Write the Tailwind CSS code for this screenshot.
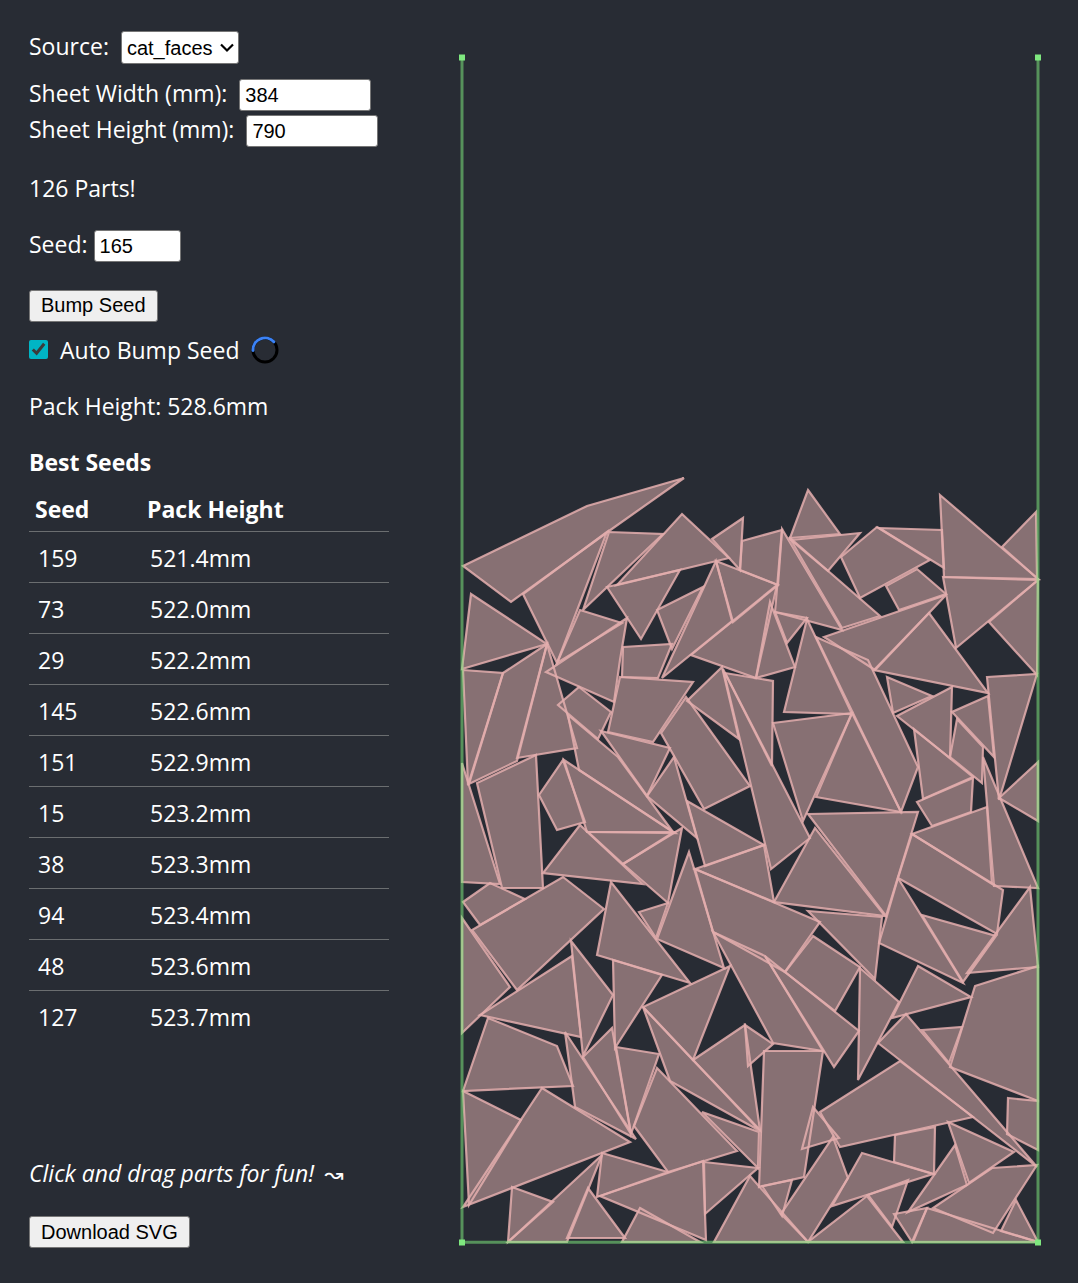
<!DOCTYPE html>
<html lang="en">
<head>
<meta charset="utf-8">
<meta name="viewport" content="width=device-width, initial-scale=1">
<title>Part Packing</title>
<script src="https://cdn.jsdelivr.net/npm/@tailwindcss/browser@4"></script>
</head>
<body class="min-h-screen bg-[#282c34] font-['Open_Sans',sans-serif] text-[23px] leading-8 text-white">
<main class="flex">
  <aside class="flex w-[456px] shrink-0 flex-col pt-[31px] pr-[67px] pl-[29px]">
    <div class="flex items-center gap-3">
      <label for="source" class="pb-1 leading-7">Source:</label>
      <div class="relative">
        <select id="source" class="block h-[33px] w-[118px] appearance-none rounded-[3px] border border-[#767676] bg-white pl-[5px] font-['Liberation_Sans',sans-serif] text-[20px] leading-6 text-black">
          <option>cat_faces</option>
        </select>
        <svg class="pointer-events-none absolute top-3 right-[5px] h-[10px] w-[14px]" viewBox="0 0 14 10" fill="none" stroke="#000" stroke-width="2.200"><path d="M1 1.500l6 6 6-6"/></svg>
      </div>
    </div>
    <div class="mt-[15px] flex items-center gap-3">
      <label for="sheet-width" class="pb-1 leading-7">Sheet Width (mm):</label>
      <input id="sheet-width" type="number" value="384" class="h-8 w-[132px] rounded-[3px] border border-[#767676] bg-white px-[5px] font-['Liberation_Sans',sans-serif] text-[20px] text-black">
    </div>
    <div class="mt-1 flex items-center gap-3">
      <label for="sheet-height" class="pb-1 leading-7">Sheet Height (mm):</label>
      <input id="sheet-height" type="number" value="790" class="h-8 w-[132px] rounded-[3px] border border-[#767676] bg-white px-[5px] font-['Liberation_Sans',sans-serif] text-[20px] text-black">
    </div>
    <p class="mt-[25px]">126 Parts!</p>
    <div class="mt-[26px] flex items-center gap-[6px]">
      <label for="seed" class="pb-1 leading-7">Seed:</label>
      <input id="seed" type="number" value="165" class="h-8 w-[87px] rounded-[3px] border border-[#767676] bg-white px-[5px] font-['Liberation_Sans',sans-serif] text-[20px] text-black">
    </div>
    <button type="button" class="mt-7 h-8 self-start rounded-[3px] border border-[#767676] bg-[#efefef] px-[11px] pb-0.5 font-['Liberation_Sans',sans-serif] text-[20px] leading-6 text-black">Bump Seed</button>
    <div class="mt-3 flex items-center">
      <input id="auto" type="checkbox" checked class="mr-3 mb-0.5 size-[19px] accent-[#00b5c5]">
      <label for="auto">Auto Bump Seed</label>
      <svg class="ml-3 size-7" viewBox="0 0 28 28" fill="none" stroke-width="3">
        <circle cx="14" cy="14" r="12" stroke="#000"/>
        <path d="M2 14.500A12 12 0 0 1 22.800 5.800" stroke="#3b82f6" stroke-linecap="round"/>
      </svg>
    </div>
    <p class="mt-6">Pack Height: 528.6mm</p>
    <h2 class="mt-6 font-bold">Best Seeds</h2>
    <table class="mt-0.5 w-full table-fixed border-collapse text-left">
      <thead>
        <tr class="h-[51px] border-b border-[#6b6e70] leading-8"><th class="w-[112px] pt-2 pl-[6px]">Seed</th><th class="pt-2 pl-[6px]">Pack Height</th></tr>
      </thead>
      <tbody id="seeds"></tbody>
    </table>
    <footer class="mt-auto">
      <p class="italic">Click and drag parts for fun! <span class="ml-1 font-['DejaVu_Sans',sans-serif]">↝</span></p>
      <button type="button" class="mt-[26px] block h-8 rounded-[3px] border border-[#767676] bg-[#efefef] px-[11px] font-['Liberation_Sans',sans-serif] text-[20px] leading-6 text-black">Download SVG</button>
    </footer>
  </aside>
  <section class="min-w-0 flex-1 pt-[50px] pr-[34px]">
    <svg class="block h-auto w-full" viewBox="456 50 588 1198" role="img" aria-label="Packed sheet">
      <g id="fills" fill="#877073"></g>
      <g id="outlines" fill="none" stroke="#e3aeae" stroke-opacity=".86" stroke-width="2.200"></g>
      <path d="M462 58V1242.300H1038V58" fill="none" stroke="#7ce57c" stroke-opacity=".55" stroke-width="3"/>
      <path d="M459 54.500h6v6h-6zM1035 54.500h6v6h-6zM459 1239.500h6v6h-6zM1035 1239.500h6v6h-6z" fill="#7fe87f"/>
    </svg>
  </section>
</main>
<script>
const seeds = [[159,"521.4"],[73,"522.0"],[29,"522.2"],[145,"522.6"],[151,"522.9"],[15,"523.2"],[38,"523.3"],[94,"523.4"],[48,"523.6"],[127,"523.7"]];
document.getElementById("seeds").innerHTML = seeds.map(([s, h]) =>
  `<tr class="h-[51px] border-b border-[#6b6e70] last:border-b-0"><td class="pt-0.5 pl-[9px]">${s}</td><td class="pt-0.5 pl-[9px]">${h}mm</td></tr>`).join("");

const parts = `
463,566 587,506 684,478 609,531 511,602
607,532 523,594 557,663
609,532 663,534 583,610
682,514 729,558 617,585
607,587 680,570 641,639
712,539 743,518 740,570
742,541 782,530 778,585 740,570
657,610 703,587 672,649
716,561 732,621 662,678
716,561 778,585 733,622
777,585 691,655 756,678
770,602 795,667 756,678
775,612 807,618 787,643
782,529 842,630 775,612
789,537 880,616 842,628
808,490 840,534 790,538
791,540 860,533 828,571
877,527 930,560 860,598 841,557
879,528 942,530 944,568
940,495 1038,579 944,577
1036,512 1002,547 1037,578
943,577 1038,580 956,648
1038,580 989,622 1037,675
917,569 946,594 899,610 886,586
946,595 824,637 875,670
929,613 874,670 988,693
807,619 784,712 852,714
816,637 868,660 918,767 901,812
773,723 852,713 803,821
852,713 901,812 816,797
808,814 918,812 886,916
815,828 774,902 885,916
725,673 773,681 772,766
723,669 810,838 771,869
722,667 687,701 739,739
686,697 661,733 704,809 750,786
620,677 693,682 653,742 608,732
623,647 672,644 658,678 622,677
580,610 622,623 557,663
627,618 546,672 614,702 620,660
579,687 611,712 598,739 558,705
471,594 547,644 462,669
463,670 503,673 468,785
547,644 503,673 469,784 517,761
547,644 577,748 517,758
536,755 477,783 502,888 543,888
462,763 500,884 462,882
563,760 585,822 557,830 539,795
564,760 675,833 587,832
568,715 579,770 673,832 618,757
601,731 670,748 647,796
674,757 647,796 697,838
687,801 764,845 705,866
764,845 774,902 695,869
695,869 820,922 785,972 713,932
580,825 543,873 643,884
588,832 674,832 623,864
682,828 623,864 668,903
689,852 657,939 724,968
668,903 639,912 656,938
611,882 597,955 690,983
563,877 604,909 517,990 472,930
463,902 490,883 525,899 480,925
462,918 510,987 462,1033
572,956 581,1037 480,1015
571,941 613,995 583,1056
613,960 662,975 615,1048
730,966 643,1007 693,1060
488,1018 557,1046 573,1086 463,1091
463,1091 521,1120 469,1205
542,1088 630,1142 463,1207
565,1032 575,1107 636,1139
583,1057 612,1028 631,1134
616,1047 659,1054 631,1134
657,1068 737,1151 668,1172 634,1126
643,1007 670,1081 760,1131
745,1025 693,1060 760,1130
702,1112 759,1132 758,1168
602,1153 668,1172 597,1197
703,1161 600,1196 706,1240
704,1162 758,1168 705,1214
640,1208 700,1242 622,1242
588,1188 625,1238 567,1238
602,1155 508,1242 567,1242
512,1187 553,1202 508,1242
750,1176 808,1242 714,1242
762,1186 792,1180 782,1216
764,1051 823,1051 804,1177 759,1187
745,1025 773,1044 748,1066
813,1107 839,1138 802,1149
833,1137 848,1178 808,1242 781,1214
820,1112 900,1061 973,1117 840,1147
862,1153 933,1174 832,1206
895,1135 935,1127 934,1174 894,1162
868,1195 908,1180 892,1227
867,1196 903,1242 808,1242
955,1145 967,1185 908,1212
948,1122 1014,1152 969,1183
1037,1165 993,1233 933,1208 992,1168
927,1208 1038,1242 913,1242
894,1214 927,1208 912,1242
1016,1200 1038,1242 1001,1231
1008,1098 1038,1101 1038,1150 1007,1134
975,986 1038,966 1038,1101 950,1067
906,1014 878,1043 1037,1167
922,1030 962,1027 949,1063
918,966 971,997 892,1018
860,968 899,1002 858,1080
813,936 860,967 835,1011 785,972
765,956 859,1031 834,1067
713,932 765,956 823,1051 773,1043
808,911 882,917 875,979
898,878 963,983 879,943
922,915 996,936 963,982
1030,887 1038,967 967,973
912,834 1003,890 997,934 898,878
912,834 987,807 992,884
983,757 1038,888 994,886
999,798 1038,762 1038,821
987,677 1037,674 999,800
988,696 952,712 994,757
957,719 983,747 982,783 950,757
952,687 897,716 950,758
887,677 932,696 893,713
914,729 973,777 923,799
973,778 971,812 932,826 917,802`.trim().split("\n");
const shapes = parts.map(p => `<polygon points="${p}"/>`).join("");
document.getElementById("fills").innerHTML = shapes;
document.getElementById("outlines").innerHTML = shapes;
</script>
</body>
</html>
